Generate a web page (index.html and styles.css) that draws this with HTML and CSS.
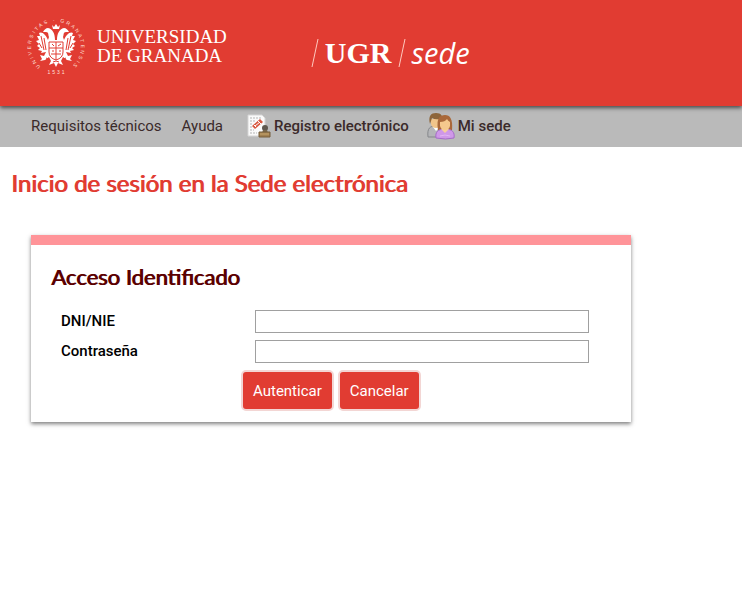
FILE: index.html
```html
<!DOCTYPE html>
<html lang="es">
<head>
    <meta charset="UTF-8">
    <meta name="viewport" content="width=device-width, initial-scale=1">
    <title>Inicio de sesión en la Sede electrónica</title>
    <link rel="stylesheet" href="styles.css">
</head>
<body>
    <header class="header">
        <a href="#" class="university">
            <svg class="seal" viewBox="0 0 60 60" width="60" height="60" aria-hidden="true">
                <defs>
                    <path id="ring" d="M30,56 A25,25 0 0 1 30,6 A25,25 0 0 1 30,56"/>
                </defs>
                <!-- Leyenda circular -->
                <text class="seal-text" text-anchor="middle"><textPath href="#ring" startOffset="50%">UNIVERSITAS · GRANATENSIS</textPath></text>
                <text class="seal-text" x="31" y="58" text-anchor="middle">1531</text>
                <!-- Águila bicéfala -->
                <g fill="#fff">
                    <path d="M27 13 L26 9 L28 11 L30 8 L32 11 L34 9 L33 13 Z"/>
                    <path d="M29 24 C29 18 27 13 22 12 C20 12 18 14 17 16 L20 16 C23 16 22 19 23 21 L22 24 C20 19 16 15 13 17 L14 20 L11 20 L13 24 L10 25 L13 28 L11 30 L14 32 L12 34 L16 35 L15 37 L20 36 L18 40 L14 39 L16 43 L14 45 L19 44 L23 41 L25 45 L23 49 L28 47 L30 51 L32 47 L37 49 L35 45 L37 41 L41 44 L46 45 L44 43 L46 39 L42 40 L40 36 L45 37 L44 35 L48 34 L46 32 L49 30 L47 28 L50 25 L47 24 L49 20 L46 20 L47 17 C44 15 40 19 38 24 L37 21 C38 19 37 16 40 16 L43 16 C42 14 40 12 38 12 C33 13 31 18 31 24 Z"/>
                </g>
                <!-- Plumas y escudo -->
                <g fill="none" stroke="#e13c32" stroke-width="1">
                    <path d="M15 20l3 14M18 22l2 12M45 20l-3 14M42 22l-2 12M13 27l3 5M47 27l-3 5"/>
                    <path d="M23 26h14v10q0 6-7 8q-7-2-7-8z" fill="#fff"/>
                    <path d="M30 26v18M23 32h14M25 38h10M26 28l2 2M32 30l3-2M26 35h2M33 35h2"/>
                    <path d="M20 42l4 2M40 42l-4 2M27 46l3-1l3 1"/>
                </g>
            </svg>
            <span class="wordmark">
                <span>UNIVERSIDAD</span>
                <span>DE GRANADA</span>
            </span>
        </a>
        <a href="#" class="site">
            <svg class="slash" viewBox="0 0 8 30" width="8" height="30" aria-hidden="true"><path d="M7 1L1 29" stroke="#ffc9be" stroke-width="1"/></svg>
            <span class="site-ugr">UGR</span>
            <svg class="slash" viewBox="0 0 8 30" width="8" height="30" aria-hidden="true"><path d="M7 1L1 29" stroke="#ffc9be" stroke-width="1"/></svg>
            <span class="site-sede">sede</span>
        </a>
    </header>

    <nav class="nav">
        <a href="#">Requisitos técnicos</a>
        <a href="#">Ayuda</a>
        <a href="#" class="nav-strong nav-registro">
            <svg viewBox="0 0 24 24" width="24" height="24" aria-hidden="true">
                <path d="M1 1h14l3 3v18H1z" fill="#fafafa" stroke="#d5d5d5"/>
                <path d="M3 4h9M3 7h5M3 10h3M3 13h3M3 16h4M3 19h7M12 4h3" stroke="#b5b5b5" stroke-dasharray="2 1"/>
                <path d="M5 12l8-7 3 3-8 7z" fill="#d8573f"/>
                <path d="M8 12l5-4M7 11l2 2M11 7l3 3" stroke="#fff" stroke-width="1"/>
                <circle cx="18" cy="14" r="3" fill="#5f584f"/>
                <path d="M16 16h4l1 3h-6z" fill="#77684f"/>
                <path d="M12 18h11v5H12z" fill="#a18050" stroke="#755d3b"/>
                <path d="M13 20h9" stroke="#c7a56d"/>
            </svg>
            Registro electrónico
        </a>
        <a href="#" class="nav-strong nav-sede">
            <svg viewBox="0 0 28 28" width="28" height="28" aria-hidden="true">
                <path d="M1 25c-1-9 2-11 8-11s8 3 8 11z" fill="#b4b5b8" stroke="#85878b"/>
                <path d="M6 15l3 4 4-4" fill="#fff"/>
                <path d="M4 7h10v5q-1 4-5 4t-5-4z" fill="#f0c48a"/>
                <path d="M3 12C1 4 4 1 9 1s8 3 6 10l-2-4q-5 1-8-1z" fill="#8d653a"/>
                <path d="M11 18C9 6 13 3 18 3s8 4 7 15z" fill="#a9683a"/>
                <path d="M9 26c-1-6 2-9 9-9s10 3 9 9q-8 2-18 0z" fill="#cf98e8" stroke="#a56cc8"/>
                <path d="M14 17l4 4 4-4" fill="#f7d099"/>
                <path d="M13 10q5 0 7-3 1 2 3 3v4q-1 4-5 4t-5-4z" fill="#f5c88d"/>
                <path d="M13 24q5-2 10 0" fill="none" stroke="#e2b5f4"/>
            </svg>
            Mi sede
        </a>
    </nav>

    <main class="main">
        <h1>Inicio de sesión en la Sede electrónica</h1>
        <form class="card">
            <h2>Acceso Identificado</h2>
            <div class="fields">
                <label for="dni">DNI/NIE</label>
                <input type="text" id="dni" name="dni">
                <label for="clave">Contraseña</label>
                <input type="password" id="clave" name="clave">
            </div>
            <div class="buttons">
                <button type="submit">Autenticar</button>
                <button type="button">Cancelar</button>
            </div>
        </form>
    </main>
</body>
</html>
```
FILE: styles.css
```css
:root {
    --red: #e13c32;
    --pink: #ff9499;
    --dark-red: #5b0000;
    --grey: #bababa;
}

* {
    box-sizing: border-box;
}

body {
    margin: 0;
    background: #fff;
    color: #000;
    font-family: Roboto, sans-serif;
    font-size: 15px;
}

a {
    color: inherit;
    text-decoration: none;
}

.header {
    position: relative;
    display: flex;
    align-items: flex-start;
    gap: 84px;
    height: 106px;
    padding: 16px 26px;
    background: var(--red);
    color: #fff;
    box-shadow: 0 2px 4px rgba(0, 0, 0, 0.6);
}

.university {
    display: flex;
    gap: 11px;
}

.seal-text {
    font-family: "Liberation Sans", sans-serif;
    font-size: 5px;
    letter-spacing: 2px;
    fill: #ffe0dc;
}

.wordmark {
    display: flex;
    flex-direction: column;
    padding-top: 11px;
    font-family: "Liberation Serif", serif;
    font-size: 19px;
    line-height: 19px;
    white-space: nowrap;
}

.site {
    display: flex;
    align-items: center;
    gap: 6px;
    padding-top: 21px;
    line-height: 32px;
}

.site-ugr {
    font-family: "Liberation Serif", serif;
    font-size: 30px;
    font-weight: bold;
}

.site-sede {
    font-family: "Open Sans", sans-serif;
    font-size: 29px;
    font-style: italic;
}

.nav {
    display: flex;
    align-items: center;
    gap: 20px;
    height: 41px;
    padding: 0 31px 2px;
    background: var(--grey);
    color: #3b2a2a;
}

.nav-strong {
    display: flex;
    align-items: center;
    gap: 3px;
    font-weight: 500;
}

.nav-registro {
    padding-left: 4px;
}

.nav-sede {
    margin-left: -2px;
}

.main {
    padding: 20px 11px;
}

h1,
h2 {
    margin: 0;
    font-family: Lato, sans-serif;
    font-weight: normal;
    text-shadow: 1px 0 currentColor;
}

h1 {
    color: var(--red);
    font-size: 24px;
    line-height: 32px;
}

.card {
    max-width: 600px;
    margin: 36px 20px;
    padding: 18px 20px 11px;
    border-top: 10px solid var(--pink);
    box-shadow: 0 2px 4px rgba(0, 0, 0, 0.5);
}

h2 {
    color: var(--dark-red);
    font-size: 22px;
    line-height: 28px;
}

.fields {
    display: grid;
    grid-template-columns: 194px 1fr;
    align-items: center;
    row-gap: 7px;
    padding: 19px 22px 7px 10px;
}

label {
    padding-bottom: 2px;
    font-weight: 500;
}

input {
    width: 100%;
    height: 23px;
    padding: 1px 4px;
    border: 1px solid #a0a0a0;
    font: inherit;
}

.buttons {
    display: flex;
    gap: 4px;
    padding-left: 190px;
}

button {
    height: 41px;
    padding: 0 10px;
    border: 2px solid #f3d6d4;
    border-radius: 5px;
    background: var(--red);
    color: #fff;
    font: inherit;
}
```
